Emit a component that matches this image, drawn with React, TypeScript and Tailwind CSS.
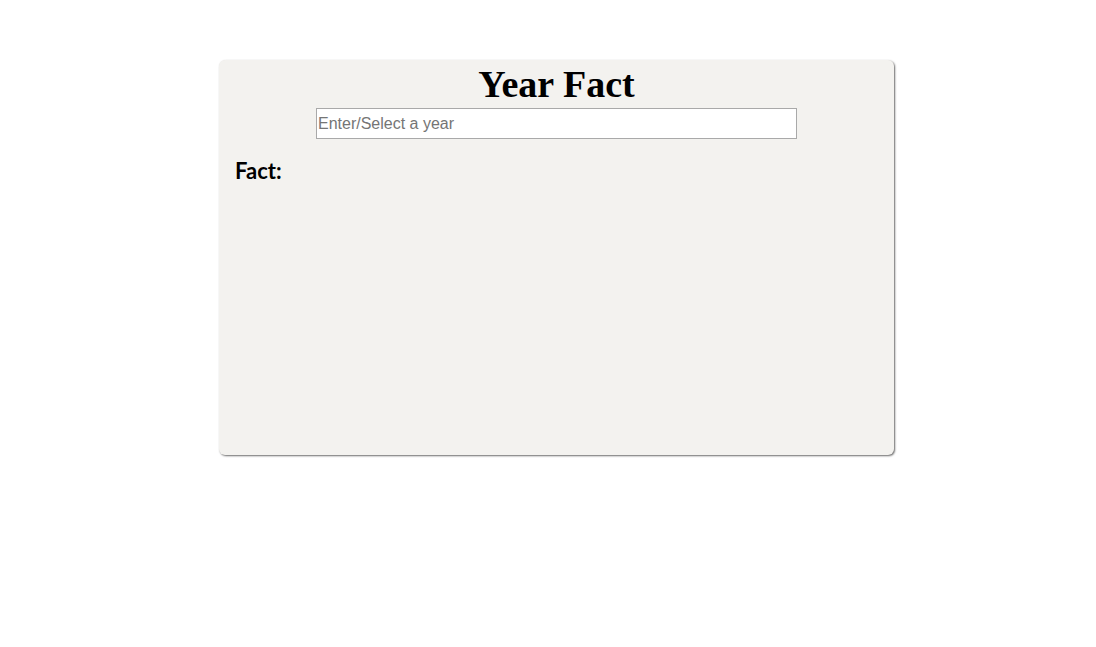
export default function App() {
  return (
    <div className="w-full h-screen bg-white">
      <div className="flex justify-center pt-[60px] pl-[17px]">
        <div className="w-[675px] h-[395px] bg-[#f3f2ef] rounded-md shadow-[1px_1px_2px_#6b6b6b] flex flex-col">
          <h1 className="text-center text-[38px] leading-[40px] font-bold text-black mt-[4px] font-['Liberation_Serif',serif]">
            Year Fact
          </h1>
          <div className="flex justify-center mt-[4px]">
            <input
              type="text"
              list="years"
              placeholder="Enter/Select a year"
              className="w-[481px] h-[31px] bg-white border border-[#a9a9a9] px-[1px] text-[16px] text-black placeholder:text-[#757575] outline-none font-['Liberation_Sans',Arial,sans-serif]"
            />
          </div>
          <h2 className="mt-[19px] ml-[16px] text-[22px] leading-[26px] font-bold text-black font-['Lato',sans-serif]">
            Fact:
          </h2>
        </div>
      </div>
    </div>
  );
}
